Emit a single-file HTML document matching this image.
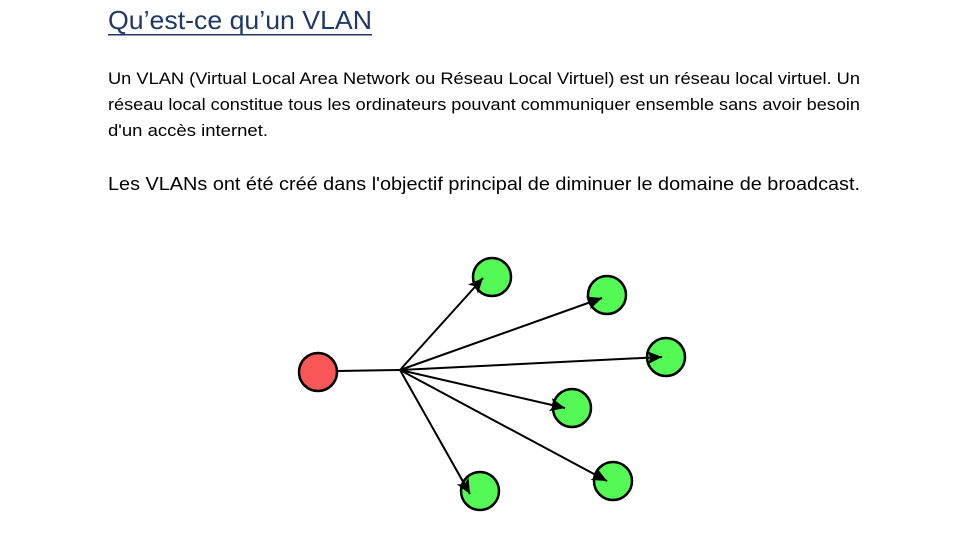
<!DOCTYPE html>
<html><head><meta charset="utf-8"><style>html,body{margin:0;padding:0;background:#fff;}svg{display:block}</style></head>
<body>
<svg width="973" height="547" viewBox="0 0 973 547" xmlns="http://www.w3.org/2000/svg">
<g font-family="'Liberation Sans', sans-serif">
<text x="108" y="29" font-size="26" fill="#1f3864" textLength="264" lengthAdjust="spacingAndGlyphs">Qu’est-ce qu’un VLAN</text>
<rect x="108" y="34" width="264" height="1.5" fill="#1f3864"/>
<text x="108" y="84" font-size="17" fill="#000" textLength="752" lengthAdjust="spacingAndGlyphs">Un VLAN (Virtual Local Area Network ou Réseau Local Virtuel) est un réseau local virtuel. Un</text>
<text x="108" y="110" font-size="17" fill="#000" textLength="752" lengthAdjust="spacingAndGlyphs">réseau local constitue tous les ordinateurs pouvant communiquer ensemble sans avoir besoin</text>
<text x="108" y="136" font-size="17" fill="#000" textLength="160" lengthAdjust="spacingAndGlyphs">d'un accès internet.</text>
<text x="108" y="190" font-size="18.5" fill="#000" textLength="752" lengthAdjust="spacingAndGlyphs">Les VLANs ont été créé dans l'objectif principal de diminuer le domaine de broadcast.</text>
</g>
<defs><marker id="a" viewBox="0 0 10 10" refX="10" refY="5" markerWidth="15" markerHeight="15" markerUnits="userSpaceOnUse" orient="auto"><path d="M0 0.5L10 5L0 9.5L2.5 5z" fill="#000"/></marker></defs>
<g stroke="#000" stroke-width="2.5" fill="#55f955">
<circle cx="492" cy="277" r="19"/>
<circle cx="607" cy="295" r="19"/>
<circle cx="666" cy="357" r="19"/>
<circle cx="572" cy="408" r="19"/>
<circle cx="480" cy="491" r="19"/>
<circle cx="613" cy="481" r="19"/>
<circle cx="318" cy="372" r="19" fill="#f95757"/>
</g>
<g stroke="#000" stroke-width="2" fill="none">
<line x1="337" y1="371" x2="400" y2="370"/>
<line x1="400" y1="370" x2="483" y2="278" marker-end="url(#a)"/>
<line x1="400" y1="370" x2="602" y2="298" marker-end="url(#a)"/>
<line x1="400" y1="370" x2="662" y2="357" marker-end="url(#a)"/>
<line x1="400" y1="370" x2="565" y2="408" marker-end="url(#a)"/>
<line x1="400" y1="370" x2="470" y2="494" marker-end="url(#a)"/>
<line x1="400" y1="370" x2="607" y2="481" marker-end="url(#a)"/>
</g>
</svg>
</body></html>
